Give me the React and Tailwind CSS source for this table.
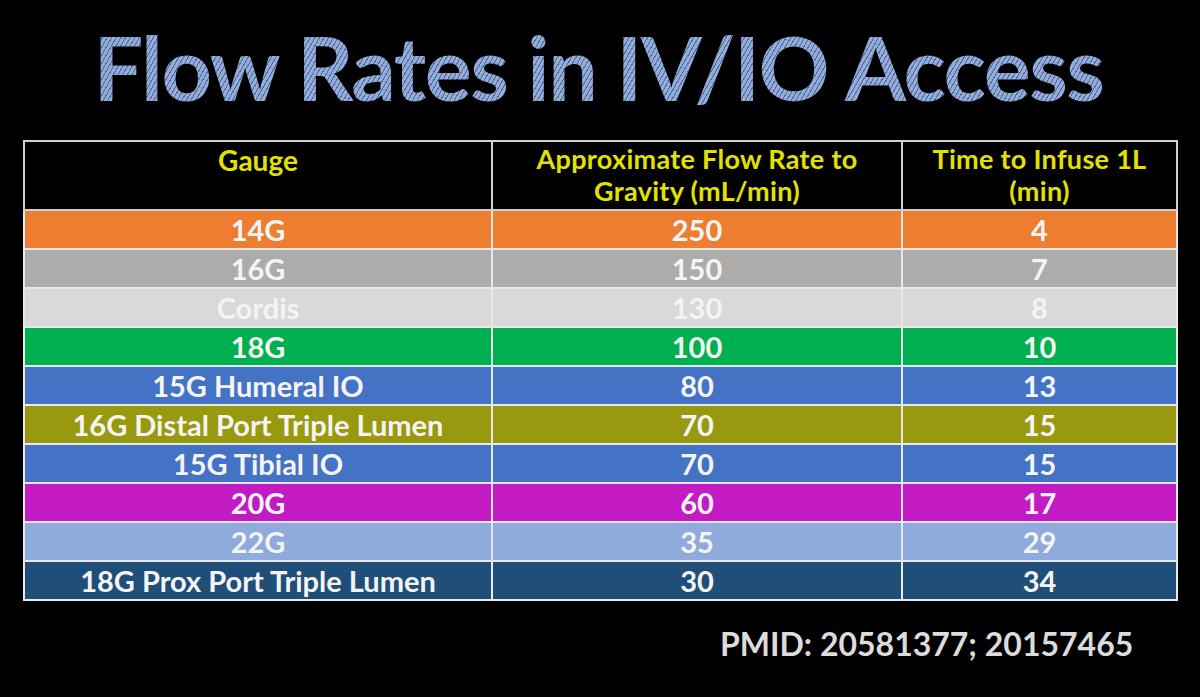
import React from "react";

const rows = [
  ["14G", "250", "4", "bg-[#ed7d31]"],
  ["16G", "150", "7", "bg-[#aeabab]"],
  ["Cordis", "130", "8", "bg-[#d9d9d9]"],
  ["18G", "100", "10", "bg-[#00b050]"],
  ["15G Humeral IO", "80", "13", "bg-[#4472c4]"],
  ["16G Distal Port Triple Lumen", "70", "15", "bg-[#999910]"],
  ["15G Tibial IO", "70", "15", "bg-[#4472c4]"],
  ["20G", "60", "17", "bg-[#c21bc3]"],
  ["22G", "35", "29", "bg-[#8faadc]"],
  ["18G Prox Port Triple Lumen", "30", "34", "bg-[#1f4e79]"],
];

export default function App() {
  return (
    <div className="w-[1200px] h-[697px] bg-black overflow-hidden font-['Lato','Noto_Sans',sans-serif]">
      <div className="h-[140px] flex items-center justify-center pr-[3px] pb-[6px]">
        <h1 className="whitespace-nowrap text-[88px] font-bold leading-none tracking-[-1.5px] text-transparent bg-clip-text bg-[repeating-linear-gradient(120deg,#93acda_0px,#93acda_3px,#506a9a_3px,#506a9a_4px)] font-['Lato',sans-serif]">
          Flow Rates in IV/IO Access
        </h1>
      </div>
      <div className="pl-[23px]">
        <table className="border-collapse border-2 border-[#cfcfcf] text-center">
          <thead>
            <tr className="h-[69px] bg-black">
              <th className="w-[468px] border-2 border-[#cfcfcf] align-top pt-[2px] text-[28px] leading-[32px] font-bold text-[#e2e200]">Gauge</th>
              <th className="w-[410px] border-2 border-[#cfcfcf] align-top pt-[1px] text-[27px] leading-[32px] font-bold text-[#e2e200] tracking-[0.3px]">
                <div>Approximate Flow Rate to</div>
                <div>Gravity (mL/min)</div>
              </th>
              <th className="w-[275px] border-2 border-[#cfcfcf] align-top pt-[1px] text-[27px] leading-[32px] font-bold text-[#e2e200] tracking-[0.3px]">
                <div>Time to Infuse 1L</div>
                <div>(min)</div>
              </th>
            </tr>
          </thead>
          <tbody>
            {rows.map(([g, f, t, bg], i) => (
              <tr key={i} className={`h-[39px] ${bg}`}>
                <td className="border-2 border-[#e8e8e8] text-[29px] leading-none font-bold text-[#f4f4f4]">{g}</td>
                <td className="border-2 border-[#e8e8e8] text-[29px] leading-none font-bold text-[#f4f4f4]">{f}</td>
                <td className="border-2 border-[#e8e8e8] text-[29px] leading-none font-bold text-[#f4f4f4]">{t}</td>
              </tr>
            ))}
          </tbody>
        </table>
      </div>
      <div className="pl-[720px] pt-[27px] text-[32px] font-bold leading-none text-[#dcdcdc]">
        PMID: 20581377; 20157465
      </div>
    </div>
  );
}
